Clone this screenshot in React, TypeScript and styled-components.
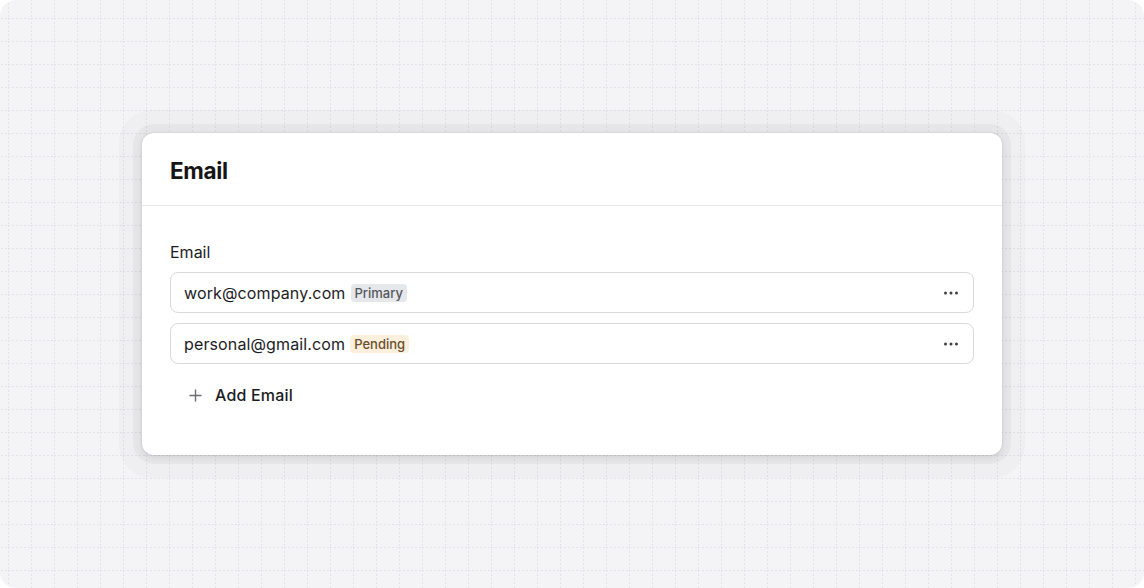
import React from "react";
import styled, { createGlobalStyle } from "styled-components";

const Global = createGlobalStyle`
  html, body { margin: 0; padding: 0; background: #ffffff; }
  body { font-family: Inter, "Noto Sans", sans-serif; -webkit-font-smoothing: antialiased; }
  * { box-sizing: border-box; }
`;

const Page = styled.div`
  position: relative;
  width: 1144px;
  height: 588px;
  border-radius: 16px;
  background: #f4f4f6;
  overflow: hidden;
  display: flex;
  align-items: center;
  justify-content: center;
`;

const GridLayer = styled.svg`
  position: absolute;
  inset: 0;
  width: 100%;
  height: 100%;
  pointer-events: none;
`;

const Card = styled.section`
  position: relative;
  width: 860px;
  background: #ffffff;
  border-radius: 12px;
  box-shadow:
    0 0 0 1px rgba(0, 0, 0, 0.03),
    0 2px 6px rgba(0, 0, 0, 0.1),
    0 0 0 9px rgba(0, 0, 0, 0.035),
    0 0 0 23px rgba(0, 0, 0, 0.02);
`;

const CardHeader = styled.header`
  height: 73px;
  padding: 0 28px;
  display: flex;
  align-items: center;
  border-bottom: 1px solid #e8e8eb;
`;

const Title = styled.h2`
  margin: 0;
  font-family: Inter, sans-serif;
  font-size: 22.5px;
  font-weight: 700;
  letter-spacing: -0.015em;
  color: #151517;
  padding-top: 2px;
`;

const CardBody = styled.div`
  padding: 36px 28px 40px 28px;
  display: flex;
  flex-direction: column;
`;

const Label = styled.div`
  font-size: 16px;
  line-height: 20px;
  color: #1c1c1f;
  margin-bottom: 10px;
`;

const List = styled.div`
  display: flex;
  flex-direction: column;
  gap: 10px;
`;

const Row = styled.div`
  height: 41px;
  border: 1px solid #dadadd;
  border-radius: 8px;
  padding: 0 13px;
  display: flex;
  align-items: center;
  gap: 5px;
`;

const Address = styled.span`
  font-size: 16px;
  color: #1c1c1f;
  letter-spacing: 0.008em;
`;

const Badge = styled.span<{ $tone: "neutral" | "warning" }>`
  font-size: 13px;
  line-height: 18px;
  padding: 0 4px;
  border-radius: 4px;
  font-weight: 500;
  background: ${(p) => (p.$tone === "neutral" ? "#e6e7ea" : "#fcefdc")};
  color: ${(p) => (p.$tone === "neutral" ? "#55575d" : "#6a4e2c")};
`;

const MenuButton = styled.button`
  margin-left: auto;
  width: 24px;
  height: 24px;
  border: none;
  background: transparent;
  padding: 0;
  display: flex;
  align-items: center;
  justify-content: center;
  color: #3f3f44;
  cursor: pointer;
  margin-right: -3px;
`;

const AddButton = styled.button`
  margin-top: 11px;
  height: 40px;
  align-self: flex-start;
  border: none;
  background: transparent;
  padding: 0 0 0 19px;
  display: flex;
  align-items: center;
  gap: 13px;
  font-family: Inter, sans-serif;
  font-size: 16px;
  font-weight: 500;
  letter-spacing: 0.012em;
  color: #1c1c1f;
  cursor: pointer;
`;

const Dots = () => (
  <svg width="16" height="4" viewBox="0 0 16 4">
    <circle cx="2.5" cy="2" r="1.5" fill="currentColor" />
    <circle cx="8" cy="2" r="1.5" fill="currentColor" />
    <circle cx="13.5" cy="2" r="1.5" fill="currentColor" />
  </svg>
);

const Plus = () => (
  <svg width="13" height="13" viewBox="0 0 13 13">
    <path d="M6.5 0.5v12M0.5 6.5h12" stroke="#6b6b70" strokeWidth="1.4" fill="none" />
  </svg>
);

const emails = [
  { address: "work@company.com", status: "Primary", tone: "neutral" as const },
  { address: "personal@gmail.com", status: "Pending", tone: "warning" as const },
];

export default function App() {
  return (
    <>
      <Global />
      <Page>
        <GridLayer xmlns="http://www.w3.org/2000/svg">
          <defs>
            <pattern id="grid" x="8" y="18" width="23" height="23" patternUnits="userSpaceOnUse">
              <path d="M0.5 0V23" stroke="#e3e3e7" strokeWidth="1" strokeDasharray="2 2" />
              <path d="M0 0.5H23" stroke="#e3e3e7" strokeWidth="1" strokeDasharray="2 2" />
            </pattern>
          </defs>
          <rect width="100%" height="100%" fill="url(#grid)" />
        </GridLayer>
        <Card>
          <CardHeader>
            <Title>Email</Title>
          </CardHeader>
          <CardBody>
            <Label>Email</Label>
            <List>
              {emails.map((e) => (
                <Row key={e.address}>
                  <Address>{e.address}</Address>
                  <Badge $tone={e.tone}>{e.status}</Badge>
                  <MenuButton aria-label="More">
                    <Dots />
                  </MenuButton>
                </Row>
              ))}
            </List>
            <AddButton>
              <Plus />
              Add Email
            </AddButton>
          </CardBody>
        </Card>
      </Page>
    </>
  );
}
